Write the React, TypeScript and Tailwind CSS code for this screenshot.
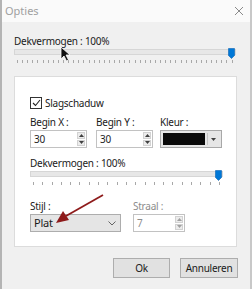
import React from 'react';

const font = { fontFamily: '"Noto Sans", "Open Sans", sans-serif' };

function Thumb() {
  return (
    <svg width="7" height="11" viewBox="0 0 7 11" className="absolute -top-[2px] right-0">
      <path d="M0.5 0.5 H6.5 V7.5 L3.5 10.5 L0.5 7.5 Z" fill="#0078d7" stroke="#0a63b3" strokeWidth="0.6" />
    </svg>
  );
}

function Slider({ width, ticks }: { width: number; ticks: number }) {
  const items = Array.from({ length: ticks });
  return (
    <div style={{ width }}>
      <div className="relative h-[6px] border border-[#d6d6d6] bg-[#e7e7e7]">
        <Thumb />
      </div>
      <div className="mt-[5px] flex justify-between px-[3px]">
        {items.map((_, i) => (
          <div key={i} className="h-[3px] w-px bg-[#a8a8a8]" />
        ))}
      </div>
    </div>
  );
}

function SpinBox({ value, width, disabled }: { value: string; width: number; disabled?: boolean }) {
  return (
    <div
      className="flex h-[18px] items-stretch border border-[#c2c2c2] bg-white"
      style={{ width }}
    >
      <div className={`flex-1 pl-[3px] text-[10px] leading-[16px] ${disabled ? 'text-[#8c8c8c]' : 'text-[#1e1e1e]'}`}>
        {value}
      </div>
      <div className="flex w-[10px] flex-col gap-px p-px">
        <div className="flex flex-1 items-center justify-center border border-[#d2d2d2] bg-[#ececec]">
          <svg width="5" height="3" viewBox="0 0 5 3"><path d="M0 3 L2.5 0 L5 3 Z" fill={disabled ? '#a0a0a0' : '#404040'} /></svg>
        </div>
        <div className="flex flex-1 items-center justify-center border border-[#d2d2d2] bg-[#ececec]">
          <svg width="5" height="3" viewBox="0 0 5 3"><path d="M0 0 L2.5 3 L5 0 Z" fill={disabled ? '#a0a0a0' : '#404040'} /></svg>
        </div>
      </div>
    </div>
  );
}

export default function App() {
  return (
    <div className="relative h-[289px] w-[252px] overflow-hidden bg-[#f0f0f0]" style={font}>
      <div className="h-full border-x-[2px] border-[#b4b4b4] border-r-[#c8c8c8]">
        <div className="flex h-[22px] items-center justify-between bg-[#fafafa] pl-[3px] pr-[6px]">
          <span className="text-[11px] text-[#a0a0a0]">Opties</span>
          <svg width="10" height="10" viewBox="0 0 10 10">
            <path d="M1 1 L9 9 M9 1 L1 9" stroke="#8a8a8a" strokeWidth="1" />
          </svg>
        </div>

        <div className="pl-[12px] pt-[12px] text-[10px] leading-[14px] tracking-[-0.25px] text-[#1a1a1a]">
          <div>Dekvermogen : 100%</div>
          <div className="mt-[1px]">
            <Slider width={222} ticks={43} />
          </div>

          <div className="mt-[13px] h-[171px] w-[223px] border border-[#dcdcdc] bg-white pl-[15px] pt-[19px]">
            <div className="flex items-center gap-[3px]">
              <div className="flex h-[12px] w-[12px] items-center justify-center border border-[#333] bg-white">
                <svg width="9" height="8" viewBox="0 0 9 8">
                  <path d="M1 4 L3.5 6.5 L8 1" stroke="#222" strokeWidth="1.1" fill="none" />
                </svg>
              </div>
              <span>Slagschaduw</span>
            </div>

            <div className="mt-[5px] flex gap-[9px]">
              <div>
                <div className="leading-[14px]">Begin X :</div>
                <div className="mt-[1px]"><SpinBox value="30" width={57} /></div>
              </div>
              <div>
                <div className="leading-[14px]">Begin Y :</div>
                <div className="mt-[1px]"><SpinBox value="30" width={57} /></div>
              </div>
              <div className="-ml-[2px]">
                <div className="leading-[14px]">Kleur :</div>
                <div className="mt-[1px] flex h-[18px] w-[62px] items-stretch border border-[#a8a8a8] bg-[#e6e6e6] p-[2px]">
                  <div className="flex-1 bg-[#0a0a0a]" />
                  <div className="ml-[2px] flex w-[12px] items-center justify-center border-l border-[#c4c4c4]">
                    <svg width="5" height="3" viewBox="0 0 5 3"><path d="M0 0 L2.5 3 L5 0 Z" fill="#404040" /></svg>
                  </div>
                </div>
              </div>
            </div>

            <div className="mt-[8px]">Dekvermogen : 100%</div>
            <div className="mt-[1px]">
              <Slider width={193} ticks={21} />
            </div>

            <div className="mt-[14px] flex gap-[12px]">
              <div>
                <div>Stijl :</div>
                <div className="mt-[1px] flex h-[18px] w-[91px] items-center justify-between border border-[#adadad] bg-[#e5e5e5] pl-[3px] pr-[4px]">
                  <span className="text-[11px]">Plat</span>
                  <svg width="8" height="5" viewBox="0 0 8 5">
                    <path d="M0.5 0.5 L4 4 L7.5 0.5" stroke="#555" strokeWidth="0.9" fill="none" />
                  </svg>
                </div>
              </div>
              <div>
                <div className="text-[#8c8c8c]">Straal :</div>
                <div className="mt-[1px]"><SpinBox value="7" width={52} disabled /></div>
              </div>
            </div>
          </div>

          <div className="mt-[11px] flex justify-end gap-[10px] pr-[12px]">
            <button className="h-[20px] w-[57px] border border-[#adadad] bg-[#e1e1e1] text-[10px] text-[#1a1a1a]">Ok</button>
            <button className="h-[20px] w-[58px] border border-[#adadad] bg-[#e1e1e1] text-[10px] text-[#1a1a1a]">Annuleren</button>
          </div>
        </div>
      </div>

      <svg width="252" height="289" className="pointer-events-none absolute left-0 top-0">
        <line x1="103" y1="195" x2="66" y2="216" stroke="#8e1b1b" strokeWidth="1.8" />
        <path d="M56 223 L63 211 L69 220 Z" fill="#8e1b1b" />
      </svg>
      <svg width="12" height="16" viewBox="0 0 12 16" className="pointer-events-none absolute left-[60px] top-[46px]">
        <path d="M1 1 L1 13 L4 10 L6.5 15 L8.5 14 L6 9 L10 9 Z" fill="#111" stroke="#fff" strokeWidth="0.8" />
      </svg>
    </div>
  );
}
